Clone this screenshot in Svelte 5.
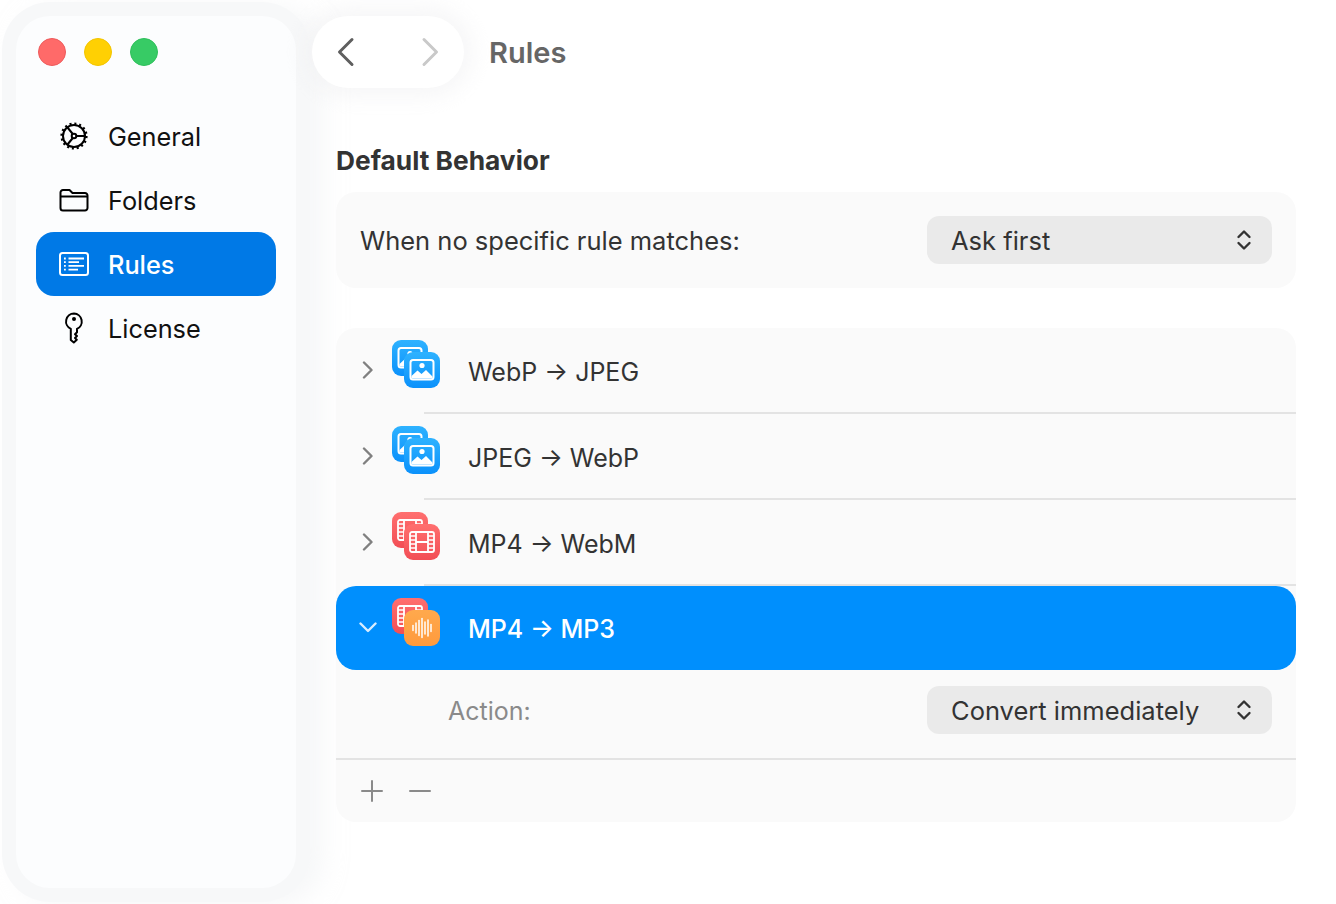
<script>
	const nav = [
		{ id: 'general', label: 'General' },
		{ id: 'folders', label: 'Folders' },
		{ id: 'rules', label: 'Rules' },
		{ id: 'license', label: 'License' }
	];

	const rules = [
		{ from: 'WebP', to: 'JPEG', back: 'image', front: 'image' },
		{ from: 'JPEG', to: 'WebP', back: 'image', front: 'image' },
		{ from: 'MP4', to: 'WebM', back: 'video', front: 'video' },
		{ from: 'MP4', to: 'MP3', back: 'video', front: 'audio', selected: true }
	];

	const bars = [5, 10, 15, 19, 12, 16, 7];
</script>

{#snippet chevrons()}
	<svg class="updown" width="16" height="22" viewBox="0 0 16 22" fill="none" stroke="#333" stroke-width="2.4" stroke-linecap="round" stroke-linejoin="round">
		<path d="M2.5 8 8 2.5 13.5 8" />
		<path d="M2.5 14 8 19.5 13.5 14" />
	</svg>
{/snippet}

{#snippet glyph(kind)}
	{#if kind === 'image'}
		<svg class="glyph" viewBox="0 0 36 36" fill="none">
			<rect x="6.5" y="8" width="23" height="19.500" rx="2.500" stroke="#fff" stroke-width="2" />
			<circle cx="18" cy="13.500" r="2.600" fill="#fff" />
			<path d="M7.500 26.500V24l6-5.500 4 3.500 4.500-4 6.500 6.500v2z" fill="#fff" />
		</svg>
	{:else if kind === 'video'}
		<svg class="glyph" viewBox="0 0 36 36" fill="none" stroke="#fff" stroke-width="1.800">
			<rect x="6" y="8" width="24" height="20" rx="2" />
			<path d="M12 8v20M24 8v20M12 18h12" />
			<path d="M6 12h6M6 16h6M6 20h6M6 24h6M24 12h6M24 16h6M24 20h6M24 24h6" stroke-width="1.400" />
		</svg>
	{:else}
		<svg class="glyph" viewBox="0 0 36 36" fill="none" stroke="#fff" stroke-width="1.500" stroke-linecap="round">
			{#each bars as h, i}
				<path d={`M${9 + i * 3} ${18 - h / 2}v${h}`} />
			{/each}
		</svg>
	{/if}
{/snippet}

<div class="window">
	<aside class="sidebar">
		<div class="lights">
			<span class="light red"></span>
			<span class="light yellow"></span>
			<span class="light green"></span>
		</div>
		<nav>
			{#each nav as item}
				<div class="nav-item" class:active={item.id === 'rules'}>
					<span class="nav-icon">
						{#if item.id === 'general'}
							<svg width="30" height="30" viewBox="0 0 30 30" fill="none" stroke="#000" stroke-width="2">
								<circle cx="15" cy="15" r="11" />
								<circle cx="15" cy="15" r="12.300" stroke-width="2.600" stroke-dasharray="2 2.830" />
								<circle cx="15" cy="15" r="2.300" />
								<path d="M17.300 15H26M13.800 13 8.500 6.500M13.800 17l-5.300 6.500" />
							</svg>
						{:else if item.id === 'folders'}
							<svg width="30" height="24" viewBox="0 0 30 24" fill="none" stroke="#000" stroke-width="2" stroke-linejoin="round">
								<path d="M1.500 4.500A2.500 2.500 0 0 1 4 2h6.500l3 3H26a2.500 2.500 0 0 1 2.500 2.500V20a2.500 2.500 0 0 1-2.500 2.500H4A2.500 2.500 0 0 1 1.500 20z" />
								<path d="M1.500 8.500h27" />
							</svg>
						{:else if item.id === 'rules'}
							<svg width="30" height="24" viewBox="0 0 30 24" fill="none" stroke="#fff" stroke-width="2">
								<rect x="1" y="1" width="28" height="22" rx="2.500" />
								<path d="M5 6.500h1.800M5 10.200h1.800M5 13.900h1.800M5 17.600h1.800" stroke-width="1.800" />
								<path d="M9.500 6.500H25M9.500 10.200H20M9.500 13.900H25M9.500 17.600H19" stroke-width="1.800" />
							</svg>
						{:else}
							<svg width="20" height="32" viewBox="0 0 20 32" fill="none" stroke="#000" stroke-width="2" stroke-linejoin="round">
								<path d="M10 1.500a8 8 0 0 0-3.200 15.300V28l3 2.500 3-2.800-1.800-1.700 2-2-2-1.800 2-2v-3.400A8 8 0 0 0 10 1.500z" />
								<circle cx="10" cy="7" r="2" fill="#000" stroke="none" />
							</svg>
						{/if}
					</span>
					<span>{item.label}</span>
				</div>
			{/each}
		</nav>
	</aside>

	<main class="content">
		<header class="topbar">
			<div class="history">
				<svg width="20" height="30" viewBox="0 0 20 30" fill="none" stroke="#5f5f5f" stroke-width="3" stroke-linecap="round" stroke-linejoin="round">
					<path d="M16 2.500 3.500 15 16 27.500" />
				</svg>
				<svg width="20" height="30" viewBox="0 0 20 30" fill="none" stroke="#c9c9c9" stroke-width="3" stroke-linecap="round" stroke-linejoin="round">
					<path d="M4 2.500 16.500 15 4 27.500" />
				</svg>
			</div>
			<h1>Rules</h1>
		</header>

		<section class="panel">
			<h2>Default Behavior</h2>
			<div class="card default-row">
				<span>When no specific rule matches:</span>
				<div class="select">
					<span>Ask first</span>
					{@render chevrons()}
				</div>
			</div>
		</section>

		<section class="card rules">
			{#each rules as rule}
				<div class="rule" class:selected={rule.selected}>
					<span class="disclosure">
						{#if rule.selected}
							<svg width="18" height="12" viewBox="0 0 18 12" fill="none" stroke="#d7ecff" stroke-width="2.400" stroke-linecap="round" stroke-linejoin="round">
								<path d="M1.500 2.500 9 10l7.500-7.500" />
							</svg>
						{:else}
							<svg width="12" height="18" viewBox="0 0 12 18" fill="none" stroke="#808080" stroke-width="2.400" stroke-linecap="round" stroke-linejoin="round">
								<path d="M2 1.500 9.500 9 2 16.500" />
							</svg>
						{/if}
					</span>
					<span class="stack">
						<span class="tile back {rule.back}">{@render glyph(rule.back)}</span>
						<span class="tile front {rule.front}">{@render glyph(rule.front)}</span>
					</span>
					<span class="rule-name">{rule.from} → {rule.to}</span>
				</div>
			{/each}
			<div class="action-row">
				<span class="action-label">Action:</span>
				<div class="select">
					<span>Convert immediately</span>
					{@render chevrons()}
				</div>
			</div>
			<div class="toolbar">
				<svg width="24" height="24" viewBox="0 0 24 24" stroke="#8a8a8a" stroke-width="2" stroke-linecap="round">
					<path d="M12 2v20M2 12h20" />
				</svg>
				<svg width="24" height="24" viewBox="0 0 24 24" stroke="#8a8a8a" stroke-width="2" stroke-linecap="round">
					<path d="M2 12h20" />
				</svg>
			</div>
		</section>
	</main>
</div>

<style>
	:global(body) {
		background: #fff;
		font-family: Inter, 'Liberation Sans', sans-serif;
		overflow: hidden;
	}

	.window {
		display: flex;
		width: 1336px;
		height: 904px;
		box-sizing: border-box;
		padding: 16px 40px 16px 16px;
		color: #333;
	}

	.sidebar {
		flex: 0 0 280px;
		box-sizing: border-box;
		padding: 0 20px;
		background: #fcfdfe;
		border-radius: 34px;
		box-shadow: 0 0 0 14px #f7f8f9, 14px 4px 22px 14px rgba(240, 241, 243, 0.5);
	}

	.lights {
		display: flex;
		gap: 18px;
		padding: 22px 0 0 2px;
		height: 28px;
	}
	.light {
		width: 28px;
		height: 28px;
		border-radius: 50%;
		box-sizing: border-box;
	}
	.red {
		background: #ff6a69;
		border: 1px solid #ee5b5c;
	}
	.yellow {
		background: #ffd003;
		border: 1px solid #f3c500;
	}
	.green {
		background: #37cb65;
		border: 1px solid #2fc05b;
	}

	nav {
		margin-top: 38px;
	}
	.nav-item {
		display: flex;
		align-items: center;
		height: 64px;
		border-radius: 18px;
		color: #111;
		font-size: 25.3px;
	}
	.nav-item.active {
		background: #0079e6;
		color: #fff;
		font-weight: 500;
	}
	.nav-icon {
		display: flex;
		justify-content: center;
		align-items: center;
		width: 30px;
		margin: 0 19px 0 23px;
	}

	.content {
		flex: 1;
		min-width: 0;
		display: flex;
		flex-direction: column;
		margin-left: 16px;
	}

	.topbar {
		display: flex;
		align-items: center;
		height: 72px;
		gap: 25px;
	}
	.history {
		display: flex;
		align-items: center;
		justify-content: space-between;
		box-sizing: border-box;
		width: 152px;
		height: 72px;
		padding: 0 24px;
		background: #fff;
		border-radius: 36px;
		box-shadow: 0 0 22px 8px rgba(238, 239, 241, 0.55);
	}
	h1 {
		margin: 0;
		font-size: 29px;
		font-weight: 600;
		color: #666;
	}

	.panel {
		margin: 56px 0 0 24px;
	}
	h2 {
		margin: 0 0 14px;
		height: 34px;
		line-height: 34px;
		font-size: 26.3px;
		font-weight: 700;
		color: #333;
	}

	.card {
		background: #fafafa;
		border-radius: 20px;
	}

	.default-row {
		display: flex;
		align-items: center;
		justify-content: space-between;
		box-sizing: border-box;
		height: 96px;
		padding: 0 24px;
		font-size: 25.5px;
	}

	.select {
		display: flex;
		align-items: center;
		justify-content: space-between;
		box-sizing: border-box;
		width: 345px;
		height: 48px;
		padding: 0 20px 0 24px;
		background: #eaeaea;
		border-radius: 12px;
		font-size: 25.5px;
		color: #333;
	}

	.rules {
		margin: 40px 0 0 24px;
		height: 494px;
		display: flex;
		flex-direction: column;
	}

	.rule {
		position: relative;
		display: flex;
		align-items: center;
		height: 86px;
		flex: none;
		font-size: 25px;
		color: #333;
	}
	.rule:nth-child(-n + 3)::after {
		content: '';
		position: absolute;
		left: 88px;
		right: 0;
		bottom: 0;
		height: 2px;
		background: #e3e3e3;
	}
	.rule.selected {
		height: 84px;
		background: #008ffd;
		border-radius: 20px;
		color: #fff;
		font-weight: 500;
	}
	.disclosure {
		display: flex;
		justify-content: center;
		width: 64px;
		flex: none;
		padding-bottom: 2px;
	}

	.stack {
		position: relative;
		flex: none;
		width: 48px;
		height: 48px;
		margin: -14px 28px 0 -8px;
	}
	.selected .stack {
		margin-top: -12px;
	}
	.tile {
		position: absolute;
		width: 36px;
		height: 36px;
		border-radius: 9px;
		display: block;
	}
	.glyph {
		display: block;
		width: 36px;
		height: 36px;
	}
	.back {
		top: 0;
		left: 0;
	}
	.front {
		top: 12px;
		left: 12px;
	}
	.image {
		background: linear-gradient(#2eb2ff, #0b91fb);
	}
	.video {
		background: linear-gradient(#ff6f6f, #f24e55);
	}
	.audio {
		background: linear-gradient(#ffa94d, #ff9a3c);
	}
	.rule-name {
		white-space: nowrap;
		padding-top: 2px;
	}
	.action-label {
		color: #8a8a8a;
		padding-top: 2px;
	}

	.action-row {
		display: flex;
		align-items: center;
		justify-content: space-between;
		box-sizing: border-box;
		height: 90px;
		flex: none;
		padding: 0 24px 8px 112px;
		border-bottom: 2px solid #e3e3e3;
		font-size: 25px;
	}

	.toolbar {
		display: flex;
		align-items: center;
		gap: 24px;
		padding: 0 24px;
		height: 62px;
	}
</style>
